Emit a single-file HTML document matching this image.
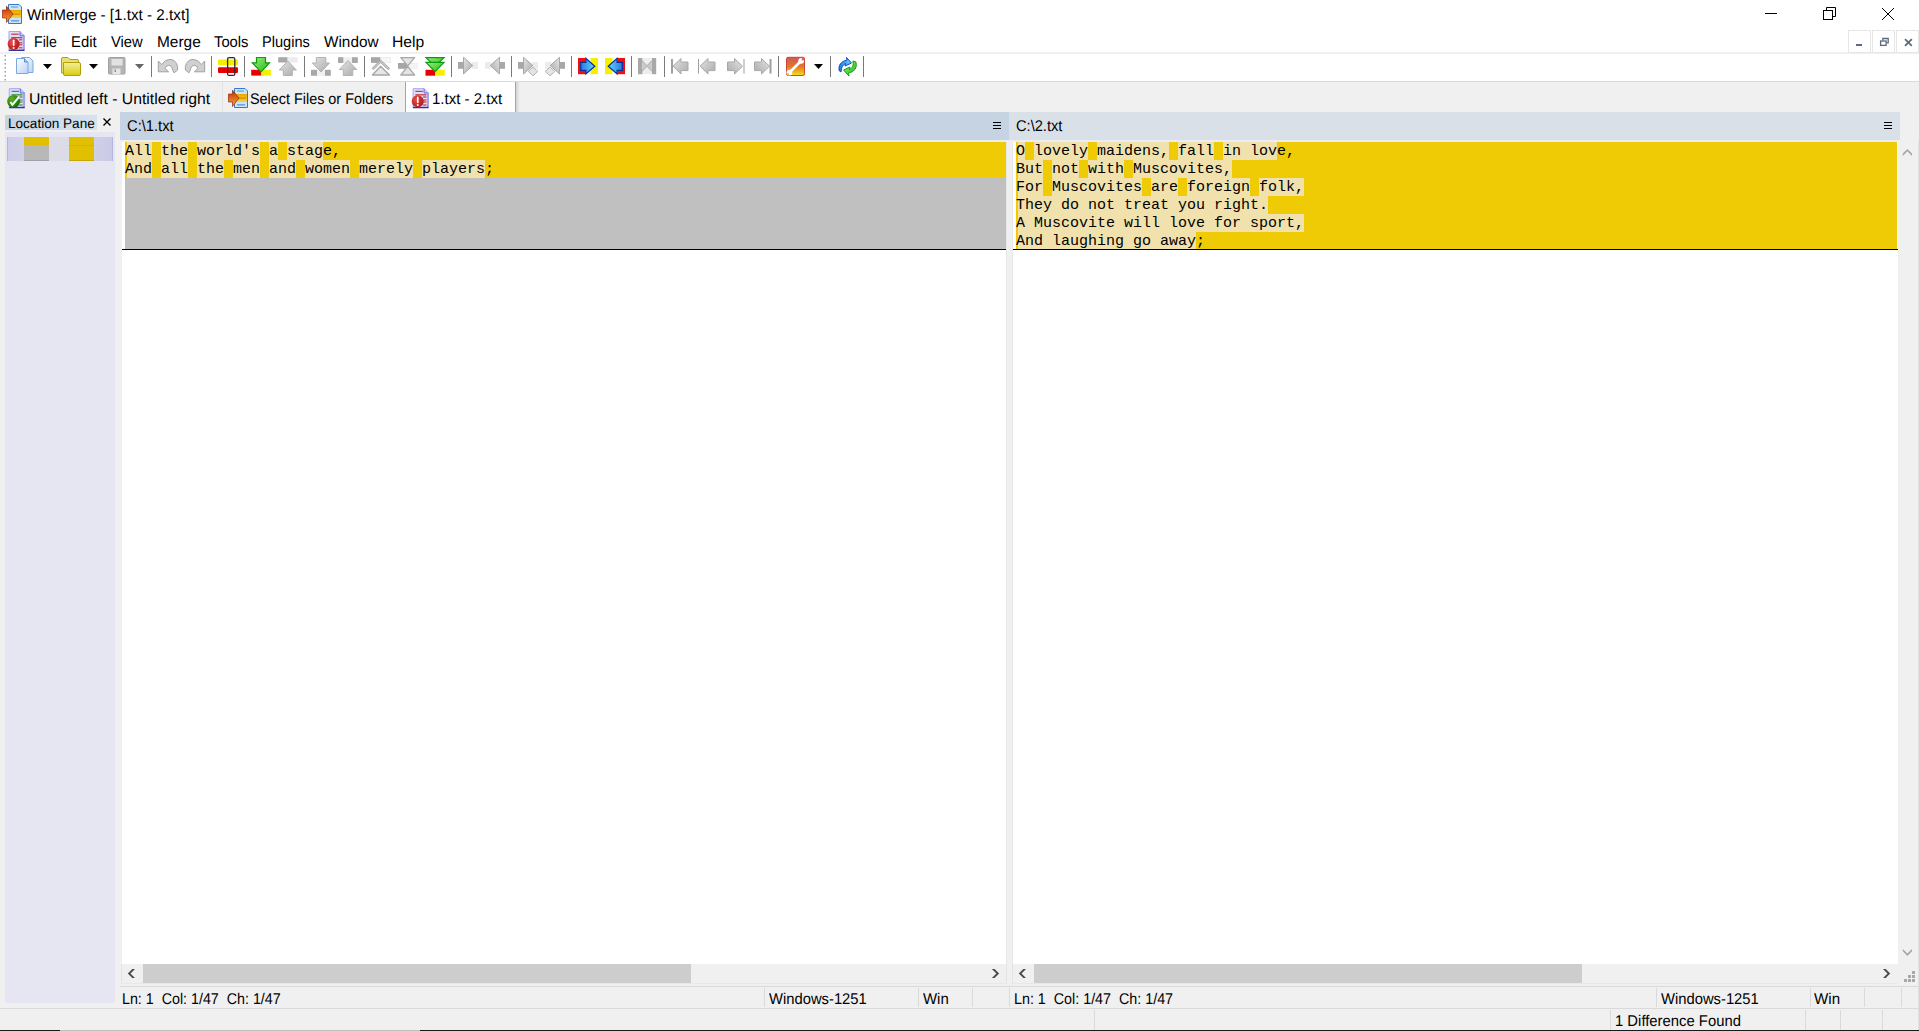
<!DOCTYPE html><html><head><meta charset="utf-8"><style>
*{margin:0;padding:0;box-sizing:border-box}
html,body{width:1919px;height:1031px;overflow:hidden;background:#f0f0f0;position:relative}
.a{position:absolute}
.t{position:absolute;font-family:"Liberation Sans",sans-serif;font-size:15px;line-height:17px;white-space:pre;color:#000;text-rendering:geometricPrecision}
.m{position:absolute;font-family:"Liberation Mono",monospace;font-size:15px;line-height:18px;white-space:pre;color:#000}
</style></head><body>
<div class="a" style="left:0px;top:0px;width:1919px;height:52px;background:#ffffff;"></div>
<div class="a" style="left:0px;top:52px;width:1919px;height:2px;background:#f0f0f0;"></div>
<div class="a" style="left:0px;top:54px;width:1919px;height:27px;background:#ffffff;"></div>
<div class="a" style="left:0px;top:81px;width:1919px;height:1px;background:#dadada;"></div>
<div class="t" style="left:27.37px;top:6.90px;font-size:15.5px;transform:scaleX(0.9818);transform-origin:0 0;">WinMerge - [1.txt - 2.txt]</div>
<div class="t" style="left:34.02px;top:34.00px;font-size:15.5px;transform:scaleX(0.9153);transform-origin:0 0;">File</div>
<div class="t" style="left:71.08px;top:34.00px;font-size:15.5px;transform:scaleX(0.9582);transform-origin:0 0;">Edit</div>
<div class="t" style="left:111.06px;top:34.00px;font-size:15.5px;transform:scaleX(0.9519);transform-origin:0 0;">View</div>
<div class="t" style="left:156.55px;top:34.00px;font-size:15.5px;transform:scaleX(0.9957);transform-origin:0 0;">Merge</div>
<div class="t" style="left:214.41px;top:34.00px;font-size:15.5px;transform:scaleX(0.9527);transform-origin:0 0;">Tools</div>
<div class="t" style="left:262.40px;top:34.00px;font-size:15.5px;transform:scaleX(0.9404);transform-origin:0 0;">Plugins</div>
<div class="t" style="left:324.27px;top:34.00px;font-size:15.5px;transform:scaleX(0.9890);transform-origin:0 0;">Window</div>
<div class="t" style="left:392.43px;top:34.00px;font-size:15.5px;transform:scaleX(1.0136);transform-origin:0 0;">Help</div>
<div class="t" style="left:28.80px;top:90.80px;font-size:15.5px;transform:scaleX(1.0159);transform-origin:0 0;">Untitled left - Untitled right</div>
<div class="a" style="left:222px;top:82px;width:1px;height:30px;background:#e2e2e2;"></div>
<div class="t" style="left:249.52px;top:90.80px;font-size:15.5px;transform:scaleX(0.9282);transform-origin:0 0;">Select Files or Folders</div>
<div class="a" style="left:405px;top:82px;width:111px;height:30px;background:#ffffff;border-left:1px solid #a4a4a4;border-right:1px solid #a4a4a4"></div>
<div class="a" style="left:516px;top:82px;width:4px;height:30px;background:linear-gradient(90deg,#d4d4d4,#f0f0f0);"></div>
<div class="t" style="left:432.40px;top:90.80px;font-size:15.5px;transform:scaleX(0.9688);transform-origin:0 0;">1.txt - 2.txt</div>
<div class="a" style="left:5px;top:115px;width:92px;height:15px;background:linear-gradient(90deg,#c6d3e3,#d6e2f0);"></div>
<div class="t" style="left:7.80px;top:114.90px;font-size:13.7px;transform:scaleX(0.9911);transform-origin:0 0;">Location Pane</div>
<div class="a" style="left:5px;top:132px;width:110px;height:871px;background:#e6e6f2;"></div>
<div class="a" style="left:7px;top:137px;width:106px;height:24px;background:linear-gradient(90deg,#cdcde8,#d6d6ea 30%,#d4d4ea 70%,#cacae6);border-right:1px solid #b6b6dc;border-left:1px solid #b6b6dc"></div>
<div class="a" style="left:24px;top:137px;width:25px;height:8px;background:#e0c000;"></div>
<div class="a" style="left:24px;top:145px;width:25px;height:16px;background:#b8b8b8;"></div>
<div class="a" style="left:49px;top:137px;width:20px;height:24px;background:#dcdce6;"></div>
<div class="a" style="left:69px;top:137px;width:25px;height:24px;background:#e0c000;"></div>
<div class="a" style="left:69px;top:145px;width:25px;height:1px;background:#d4b400;"></div>
<div class="a" style="left:24px;top:160px;width:25px;height:1px;background:#a0a0a8;"></div>
<div class="a" style="left:69px;top:160px;width:25px;height:1px;background:#c8a800;"></div>
<div class="a" style="left:120px;top:112px;width:889px;height:28px;background:#c6d3e2;"></div>
<div class="a" style="left:1009px;top:112px;width:891px;height:28px;background:#dae0e8;"></div>
<div class="t" style="left:127.31px;top:117.90px;font-size:15.5px;transform:scaleX(0.9494);transform-origin:0 0;">C:\1.txt</div>
<div class="t" style="left:1016.31px;top:117.90px;font-size:15.5px;transform:scaleX(0.9453);transform-origin:0 0;">C:\2.txt</div>
<div class="a" style="left:122px;top:140px;width:884px;height:2px;background:#ececf3;"></div>
<div class="a" style="left:1013px;top:140px;width:885px;height:2px;background:#ececf3;"></div>
<div class="a" style="left:122px;top:142px;width:884px;height:822px;background:#ffffff;"></div>
<div class="a" style="left:1013px;top:142px;width:885px;height:822px;background:#ffffff;"></div>
<div class="a" style="left:125px;top:142px;width:881px;height:18px;background:#efcb05;"></div>
<div class="a" style="left:127px;top:142px;width:25px;height:18px;background:#f1e2ad;"></div>
<div class="a" style="left:161px;top:142px;width:27px;height:18px;background:#f1e2ad;"></div>
<div class="a" style="left:197px;top:142px;width:63px;height:18px;background:#f1e2ad;"></div>
<div class="a" style="left:269px;top:142px;width:9px;height:18px;background:#f1e2ad;"></div>
<div class="a" style="left:287px;top:142px;width:36px;height:18px;background:#f1e2ad;"></div>
<div class="a" style="left:125px;top:160px;width:881px;height:18px;background:#efcb05;"></div>
<div class="a" style="left:127px;top:160px;width:25px;height:18px;background:#f1e2ad;"></div>
<div class="a" style="left:161px;top:160px;width:27px;height:18px;background:#f1e2ad;"></div>
<div class="a" style="left:197px;top:160px;width:27px;height:18px;background:#f1e2ad;"></div>
<div class="a" style="left:233px;top:160px;width:27px;height:18px;background:#f1e2ad;"></div>
<div class="a" style="left:269px;top:160px;width:27px;height:18px;background:#f1e2ad;"></div>
<div class="a" style="left:305px;top:160px;width:45px;height:18px;background:#f1e2ad;"></div>
<div class="a" style="left:359px;top:160px;width:54px;height:18px;background:#f1e2ad;"></div>
<div class="a" style="left:422px;top:160px;width:63px;height:18px;background:#f1e2ad;"></div>
<div class="a" style="left:125px;top:178px;width:881px;height:18px;background:#c0c0c0;"></div>
<div class="a" style="left:125px;top:196px;width:881px;height:18px;background:#c0c0c0;"></div>
<div class="a" style="left:125px;top:214px;width:881px;height:18px;background:#c0c0c0;"></div>
<div class="a" style="left:125px;top:232px;width:881px;height:18px;background:#c0c0c0;"></div>
<div class="a" style="left:122px;top:249px;width:884px;height:1px;background:#000;"></div>
<div class="m" style="left:125px;top:143px">All the world's a stage,</div>
<div class="m" style="left:125px;top:161px">And all the men and women merely players;</div>
<div class="a" style="left:1016px;top:142px;width:881px;height:18px;background:#efcb05;"></div>
<div class="a" style="left:1018px;top:142px;width:7px;height:18px;background:#f1e2ad;"></div>
<div class="a" style="left:1034px;top:142px;width:54px;height:18px;background:#f1e2ad;"></div>
<div class="a" style="left:1097px;top:142px;width:72px;height:18px;background:#f1e2ad;"></div>
<div class="a" style="left:1178px;top:142px;width:36px;height:18px;background:#f1e2ad;"></div>
<div class="a" style="left:1223px;top:142px;width:54px;height:18px;background:#f1e2ad;"></div>
<div class="a" style="left:1016px;top:160px;width:881px;height:18px;background:#efcb05;"></div>
<div class="a" style="left:1018px;top:160px;width:25px;height:18px;background:#f1e2ad;"></div>
<div class="a" style="left:1052px;top:160px;width:27px;height:18px;background:#f1e2ad;"></div>
<div class="a" style="left:1088px;top:160px;width:36px;height:18px;background:#f1e2ad;"></div>
<div class="a" style="left:1133px;top:160px;width:99px;height:18px;background:#f1e2ad;"></div>
<div class="a" style="left:1016px;top:178px;width:881px;height:18px;background:#efcb05;"></div>
<div class="a" style="left:1018px;top:178px;width:25px;height:18px;background:#f1e2ad;"></div>
<div class="a" style="left:1052px;top:178px;width:90px;height:18px;background:#f1e2ad;"></div>
<div class="a" style="left:1151px;top:178px;width:27px;height:18px;background:#f1e2ad;"></div>
<div class="a" style="left:1187px;top:178px;width:63px;height:18px;background:#f1e2ad;"></div>
<div class="a" style="left:1259px;top:178px;width:45px;height:18px;background:#f1e2ad;"></div>
<div class="a" style="left:1016px;top:196px;width:881px;height:18px;background:#efcb05;"></div>
<div class="a" style="left:1018px;top:196px;width:250px;height:18px;background:#f1e2ad;"></div>
<div class="a" style="left:1016px;top:214px;width:881px;height:18px;background:#efcb05;"></div>
<div class="a" style="left:1018px;top:214px;width:286px;height:18px;background:#f1e2ad;"></div>
<div class="a" style="left:1016px;top:232px;width:881px;height:18px;background:#efcb05;"></div>
<div class="a" style="left:1018px;top:232px;width:178px;height:18px;background:#f1e2ad;"></div>
<div class="a" style="left:1013px;top:249px;width:885px;height:1px;background:#000;"></div>
<div class="m" style="left:1016px;top:143px">O lovely maidens, fall in love,</div>
<div class="m" style="left:1016px;top:161px">But not with Muscovites,</div>
<div class="m" style="left:1016px;top:179px">For Muscovites are foreign folk,</div>
<div class="m" style="left:1016px;top:197px">They do not treat you right.</div>
<div class="m" style="left:1016px;top:215px">A Muscovite will love for sport,</div>
<div class="m" style="left:1016px;top:233px">And laughing go away;</div>
<div class="a" style="left:122px;top:964px;width:884px;height:19px;background:#f0f0f0;"></div>
<div class="a" style="left:143px;top:964px;width:548px;height:19px;background:#cdcdcd;"></div>
<div class="a" style="left:1013px;top:964px;width:885px;height:19px;background:#f0f0f0;"></div>
<div class="a" style="left:1034px;top:964px;width:548px;height:19px;background:#cdcdcd;"></div>
<div class="a" style="left:1898px;top:141px;width:20px;height:823px;background:#f0f0f0;"></div>
<div class="a" style="left:121px;top:964px;width:1px;height:21px;background:#e4e4e4;"></div>
<div class="a" style="left:1006px;top:964px;width:1px;height:21px;background:#e4e4e4;"></div>
<div class="a" style="left:1012px;top:964px;width:1px;height:21px;background:#e4e4e4;"></div>
<div class="a" style="left:122px;top:983px;width:884px;height:1px;background:#e8e8e8;"></div>
<div class="a" style="left:1013px;top:983px;width:885px;height:1px;background:#e8e8e8;"></div>
<div class="a" style="left:1006px;top:142px;width:1px;height:822px;background:#e8e8e8;"></div>
<div class="a" style="left:1012px;top:142px;width:1px;height:822px;background:#e8e8e8;"></div>
<div class="a" style="left:1918px;top:141px;width:1px;height:889px;background:#e2e2e2;"></div>
<div class="a" style="left:120px;top:986px;width:1799px;height:1px;background:#dadada;"></div>
<div class="a" style="left:0px;top:1008px;width:1919px;height:1px;background:#dadada;"></div>
<div class="t" style="left:121.62px;top:990.90px;font-size:15.5px;transform:scaleX(0.9207);transform-origin:0 0;">Ln: 1  Col: 1/47  Ch: 1/47</div>
<div class="t" style="left:1013.72px;top:990.90px;font-size:15.5px;transform:scaleX(0.9230);transform-origin:0 0;">Ln: 1  Col: 1/47  Ch: 1/47</div>
<div class="t" style="left:768.86px;top:990.90px;font-size:15.5px;transform:scaleX(0.9538);transform-origin:0 0;">Windows-1251</div>
<div class="t" style="left:922.66px;top:990.90px;font-size:15.5px;transform:scaleX(0.9653);transform-origin:0 0;">Win</div>
<div class="t" style="left:1660.56px;top:990.90px;font-size:15.5px;transform:scaleX(0.9538);transform-origin:0 0;">Windows-1251</div>
<div class="t" style="left:1814.07px;top:990.90px;font-size:15.5px;transform:scaleX(0.9768);transform-origin:0 0;">Win</div>
<div class="a" style="left:764px;top:988px;width:1px;height:19px;background:#dadada;"></div>
<div class="a" style="left:918px;top:988px;width:1px;height:19px;background:#dadada;"></div>
<div class="a" style="left:972px;top:988px;width:1px;height:19px;background:#dadada;"></div>
<div class="a" style="left:1009px;top:988px;width:1px;height:19px;background:#dadada;"></div>
<div class="a" style="left:1656px;top:988px;width:1px;height:19px;background:#dadada;"></div>
<div class="a" style="left:1810px;top:988px;width:1px;height:19px;background:#dadada;"></div>
<div class="a" style="left:1864px;top:988px;width:1px;height:19px;background:#dadada;"></div>
<div class="a" style="left:1901px;top:988px;width:1px;height:19px;background:#dadada;"></div>
<div class="a" style="left:1094px;top:1010px;width:1px;height:20px;background:#dadada;"></div>
<div class="a" style="left:1610px;top:1010px;width:1px;height:20px;background:#dadada;"></div>
<div class="a" style="left:1805px;top:1010px;width:1px;height:20px;background:#dadada;"></div>
<div class="a" style="left:1840px;top:1010px;width:1px;height:20px;background:#dadada;"></div>
<div class="a" style="left:1882px;top:1010px;width:1px;height:20px;background:#dadada;"></div>
<div class="t" style="left:1614.81px;top:1013.00px;font-size:15.5px;transform:scaleX(0.9569);transform-origin:0 0;">1 Difference Found</div>
<div class="a" style="left:0px;top:1030px;width:60px;height:1px;background:#1a1a1a;"></div>
<div class="a" style="left:60px;top:1030px;width:360px;height:1px;background:#c0c0c0;"></div>
<div class="a" style="left:420px;top:1030px;width:1499px;height:1px;background:#1a1a1a;"></div>
<svg class="a" style="left:0;top:0" width="1919" height="1031">
<defs>
<linearGradient id="gArrowOr" x1="0" y1="0" x2="0" y2="1"><stop offset="0" stop-color="#b83010"/><stop offset="0.5" stop-color="#e06a20"/><stop offset="1" stop-color="#f4b020"/></linearGradient>
<linearGradient id="gYel" x1="0" y1="0" x2="0" y2="1"><stop offset="0" stop-color="#e8a800"/><stop offset="0.5" stop-color="#f0c010"/><stop offset="1" stop-color="#eed060"/></linearGradient>
<radialGradient id="gRed" cx="0.35" cy="0.35" r="0.7"><stop offset="0" stop-color="#f04a4a"/><stop offset="1" stop-color="#b01818"/></radialGradient>
<radialGradient id="gGrn" cx="0.35" cy="0.3" r="0.75"><stop offset="0" stop-color="#60b020"/><stop offset="1" stop-color="#106a10"/></radialGradient>
<linearGradient id="gDoc" x1="0" y1="0" x2="1" y2="1"><stop offset="0" stop-color="#ffffff"/><stop offset="1" stop-color="#b8d4f6"/></linearGradient>
<linearGradient id="gFold" x1="0" y1="0" x2="0" y2="1"><stop offset="0" stop-color="#f4ee9a"/><stop offset="1" stop-color="#d8cc10"/></linearGradient>
<linearGradient id="gGray" x1="0" y1="0" x2="1" y2="1"><stop offset="0" stop-color="#e4e4e4"/><stop offset="1" stop-color="#aaaaaa"/></linearGradient>
<linearGradient id="gGreen" x1="0" y1="0" x2="1" y2="1"><stop offset="0" stop-color="#9af07a"/><stop offset="1" stop-color="#22b818"/></linearGradient>
<linearGradient id="gBlue" x1="0" y1="0" x2="1" y2="0"><stop offset="0" stop-color="#2a78e0"/><stop offset="1" stop-color="#60d8fa"/></linearGradient>
<linearGradient id="gBlueL" x1="1" y1="0" x2="0" y2="0"><stop offset="0" stop-color="#2a78e0"/><stop offset="1" stop-color="#60d8fa"/></linearGradient>
<linearGradient id="gWrench" x1="0" y1="0" x2="0" y2="1"><stop offset="0" stop-color="#cc5050"/><stop offset="0.55" stop-color="#ec7a18"/><stop offset="1" stop-color="#f8e410"/></linearGradient>
<g id="appicon">
  <path d="M6.5,0.5 H17 L19.5,3 V19.5 H6.5 Z" fill="#cfe3f7" stroke="#2f7ccc" stroke-width="1"/>
  <rect x="9" y="2" width="7" height="2" fill="#90bce8"/>
  <rect x="8" y="6" width="11" height="8" fill="url(#gYel)"/>
  <rect x="10" y="9.5" width="8" height="1.5" fill="#e09000"/>
  <rect x="9" y="16" width="8" height="1.6" fill="#6ca8e2"/>
  <path d="M0.5,6 H4.5 V2.2 L11,10 L4.5,18.5 V14 H0.5 Z" fill="url(#gArrowOr)" stroke="#902810" stroke-width="0.7"/>
</g>
<g id="docbase">
  <path d="M0.5,0.5 H11.5 L15.8,4.8 V19.5 H0.5 Z" fill="#dedcfa" stroke="#a4a4f4" stroke-width="1"/>
  <path d="M11.5,0.5 V4.8 H15.8" fill="#c4c4f8" stroke="#6a6ae8" stroke-width="1"/>
  <rect x="14.3" y="5" width="1.5" height="14" fill="#a0a0e6"/>
  <rect x="0.3" y="18.6" width="15.6" height="1.4" fill="#34348c"/>
</g>
<g id="docred">
  <use href="#docbase"/>
  <g fill="#c02020" opacity="0.85">
  <rect x="2.8" y="2.6" width="7.4" height="1.2"/><rect x="2.8" y="6" width="11" height="1.3"/>
  <rect x="10.5" y="8.2" width="3.3" height="1.2"/><rect x="10.5" y="11.2" width="3.3" height="1.2"/>
  <rect x="10.5" y="13.2" width="3.3" height="1.2"/><rect x="10.5" y="16.2" width="3.3" height="1.2"/></g>
  <circle cx="5.1" cy="13.1" r="6" fill="url(#gRed)"/>
  <rect x="4.3" y="8.4" width="1.7" height="6.6" rx="0.8" fill="#fff"/>
  <circle cx="5.15" cy="16.9" r="1" fill="#fff"/>
</g>
<g id="docgreen">
  <use href="#docbase"/>
  <g fill="#1a8a1a" opacity="0.85">
  <rect x="2.8" y="2.6" width="7.4" height="1.2"/><rect x="2.8" y="6" width="11" height="1.3"/>
  <rect x="10.5" y="8.2" width="3.3" height="1.2"/><rect x="10.5" y="11.2" width="3.3" height="1.2"/>
  <rect x="10.5" y="13.2" width="3.3" height="1.2"/><rect x="10.5" y="16.2" width="3.3" height="1.2"/></g>
  <circle cx="4.8" cy="13.2" r="6.4" fill="url(#gGrn)"/>
  <path d="M1.6,13.8 L3.6,16.6 L10.2,8.6" fill="none" stroke="#fff" stroke-width="2"/>
</g>
</defs>
<use href="#appicon" transform="translate(2,4)"/>
<use href="#appicon" transform="translate(228,88)"/>
<use href="#docred" transform="translate(8.5,31)"/>
<use href="#docgreen" transform="translate(8.8,88.2)"/>
<use href="#docred" transform="translate(412.6,88.2)"/>
<g stroke="#000" stroke-width="1" fill="none">
<line x1="1765" y1="13.5" x2="1777" y2="13.5"/>
<rect x="1823.5" y="10.5" width="9" height="9"/>
<path d="M1826.5,10.5 V7.5 H1835.5 V16.5 H1832.5"/>
<path d="M1882,8 L1894,20 M1894,8 L1882,20"/>
</g>
<rect x="1848.5" y="30.5" width="22" height="22" fill="#fff" stroke="#e6e6e6"/>
<rect x="1872.5" y="30.5" width="22" height="22" fill="#fff" stroke="#e6e6e6"/>
<rect x="1896.5" y="30.5" width="22" height="22" fill="#fff" stroke="#e6e6e6"/>
<rect x="1856" y="44" width="6" height="2" fill="#5b6b7d"/>
<g fill="none" stroke="#5b6b7d" stroke-width="1.3"><rect x="1880.6" y="41" width="5.5" height="4.4"/><path d="M1882.8,40.5 V38.5 H1888.2 V42.8 H1886.5"/></g>
<path d="M1905,39.2 L1911.8,45.8 M1911.8,39.2 L1905,45.8" stroke="#5b6b7d" stroke-width="1.8"/>
<rect x="4.5" y="55" width="1.5" height="1.5" fill="#a0a0a0"/>
<rect x="4.5" y="59" width="1.5" height="1.5" fill="#a0a0a0"/>
<rect x="4.5" y="63" width="1.5" height="1.5" fill="#a0a0a0"/>
<rect x="4.5" y="67" width="1.5" height="1.5" fill="#a0a0a0"/>
<rect x="4.5" y="71" width="1.5" height="1.5" fill="#a0a0a0"/>
<rect x="4.5" y="75" width="1.5" height="1.5" fill="#a0a0a0"/>
<rect x="4.5" y="79" width="1.5" height="1.5" fill="#a0a0a0"/>
<line x1="151.5" y1="56" x2="151.5" y2="77" stroke="#7a7a7a" stroke-width="1"/>
<line x1="211.5" y1="56" x2="211.5" y2="77" stroke="#7a7a7a" stroke-width="1"/>
<line x1="244.5" y1="56" x2="244.5" y2="77" stroke="#7a7a7a" stroke-width="1"/>
<line x1="304.5" y1="56" x2="304.5" y2="77" stroke="#7a7a7a" stroke-width="1"/>
<line x1="364.5" y1="56" x2="364.5" y2="77" stroke="#7a7a7a" stroke-width="1"/>
<line x1="451.5" y1="56" x2="451.5" y2="77" stroke="#7a7a7a" stroke-width="1"/>
<line x1="511.5" y1="56" x2="511.5" y2="77" stroke="#7a7a7a" stroke-width="1"/>
<line x1="571.5" y1="56" x2="571.5" y2="77" stroke="#7a7a7a" stroke-width="1"/>
<line x1="631.5" y1="56" x2="631.5" y2="77" stroke="#7a7a7a" stroke-width="1"/>
<line x1="664.5" y1="56" x2="664.5" y2="77" stroke="#7a7a7a" stroke-width="1"/>
<line x1="778.5" y1="56" x2="778.5" y2="77" stroke="#7a7a7a" stroke-width="1"/>
<line x1="830.5" y1="56" x2="830.5" y2="77" stroke="#7a7a7a" stroke-width="1"/>
<line x1="863.5" y1="56" x2="863.5" y2="77" stroke="#7a7a7a" stroke-width="1"/>
<path d="M43,64 H52 L47.5,69 Z" fill="#000"/>
<path d="M89,64 H98 L93.5,69 Z" fill="#000"/>
<path d="M135,64 H144 L139.5,69 Z" fill="#666"/>
<path d="M814,64 H823 L818.5,69 Z" fill="#000"/>
<path d="M21.5,57.5 H29.5 L33,61 V72.5 H21.5 Z" fill="url(#gDoc)" stroke="#7ea6e0"/>
<path d="M16.5,58.5 H24.5 L28,62 V73.5 H16.5 Z" fill="url(#gDoc)" stroke="#7ea6e0"/>
<path d="M24.5,58.5 V62 H28" fill="#a8c8f0" stroke="#5a8ad8"/>
<path d="M61.5,59 Q61.5,57.5 63,57.5 H68 L70,59.5 H77 Q78.5,59.5 78.5,61 V73 H61.5 Z" fill="#e8e070" stroke="#b0a010"/>
<path d="M63.5,62.5 H79 Q80.5,62.5 80.5,64 V74 Q80.5,75.5 79,75.5 H65 Q63.5,75.5 63.5,74 Z" fill="url(#gFold)" stroke="#b0a010"/>
<rect x="108.5" y="57.5" width="16.5" height="16.5" rx="1" fill="#b4b4b4" stroke="#a0a0a0"/>
<rect x="111.5" y="59" width="11" height="6.5" fill="#e2e2e2"/>
<rect x="112.5" y="68.5" width="8" height="5.5" fill="#e6e6e6"/>
<rect x="114.5" y="69.5" width="1.5" height="2.5" fill="#909090"/>
<g transform="translate(156,56)"><path d="M2.3,5 L5.6,8.6 Q9,3.4 14,3.4 Q20,3.6 21.6,10.5 L21.6,14 L18,16.8 L16.8,14.4 Q16,9.4 12.6,9.4 Q9.9,9.5 9.1,12.4 L12.6,15.8 H2.3 Z" fill="#d0d0d0" stroke="#a2a2a2" stroke-width="1"/></g>
<g transform="translate(207,56) scale(-1,1)"><path d="M2.3,5 L5.6,8.6 Q9,3.4 14,3.4 Q20,3.6 21.6,10.5 L21.6,14 L18,16.8 L16.8,14.4 Q16,9.4 12.6,9.4 Q9.9,9.5 9.1,12.4 L12.6,15.8 H2.3 Z" fill="#d0d0d0" stroke="#a2a2a2" stroke-width="1"/></g>
<rect x="218" y="59.5" width="20" height="5.7" rx="1" fill="#f6ee00"/>
<rect x="218" y="67.3" width="20" height="5.7" rx="1" fill="#e80000"/>
<rect x="227.6" y="57.6" width="7.2" height="17.8" rx="1.5" fill="none" stroke="#2a2a2a" stroke-width="1.3"/>
<rect x="251.2" y="69.8" width="9.8" height="5.8" fill="#e80000"/><rect x="261" y="69.8" width="9.9" height="5.8" fill="#f4f000"/>
<path d="M256.5,57.5 H265.5 V62.8 H269.5 L261,71.8 L252.3,62.8 H256.5 Z" fill="url(#gGreen)" stroke="#0e9a0e" stroke-width="1.2"/>
<rect x="278.2" y="57.2" width="9.4" height="5.3" fill="#a8a8a8"/><rect x="287.6" y="57.2" width="10" height="5.3" fill="#ececec"/>
<path d="M287.8,61 L296.4,70 H292.3 V75.5 H283.3 V70 H279.3 Z" fill="url(#gGray)" stroke="#b2b2b2"/>
<rect x="311" y="69.8" width="6" height="6" fill="#a8a8a8"/><rect x="324.8" y="69.8" width="6" height="6" fill="#a8a8a8"/><rect x="317" y="69.8" width="7.8" height="6" fill="#f0f0f0"/>
<path d="M316.3,57.5 H325.8 V63 H329.5 L321,72 L312.3,63 H316.3 Z" fill="url(#gGray)" stroke="#b2b2b2"/>
<rect x="338" y="57.2" width="5.6" height="5.8" fill="#a8a8a8"/><rect x="351.8" y="57.2" width="6" height="5.8" fill="#a8a8a8"/><rect x="343.6" y="57.2" width="8.2" height="5.8" fill="#f0f0f0"/>
<path d="M348,60.5 L356.7,69.5 H352.8 V75.5 H343.3 V69.5 H339.3 Z" fill="url(#gGray)" stroke="#b2b2b2"/>
<rect x="371" y="57.2" width="9.7" height="5.7" fill="#a6a6a6"/><rect x="380.7" y="57.5" width="10" height="5.2" fill="#f6f6f6" stroke="#e4e4e4" stroke-width="0.6"/>
<path d="M372.6,69.2 L380.6,61.2 L389.2,69.2" fill="none" stroke="#a8a8a8" stroke-width="2.6"/>
<path d="M372.6,69.2 L380.6,61.2 L389.2,69.2" fill="none" stroke="#d8d8d8" stroke-width="1"/>
<path d="M380.6,66.2 L389.4,75 H372.4 Z" fill="#e6e6e6" stroke="#a8a8a8" stroke-width="1.4" stroke-linejoin="round"/>
<rect x="398" y="63" width="9.7" height="5.8" fill="#a6a6a6"/><rect x="407.7" y="63.3" width="9.8" height="5.3" fill="#f4f4f4" stroke="#e6e6e6" stroke-width="0.6"/>
<path d="M400.8,57.6 H414.6 L407.7,65.8 Z" fill="#e4e4e4" stroke="#a8a8a8" stroke-width="1.3" stroke-linejoin="round"/>
<path d="M407.7,66.4 L414.6,75 H400.8 Z" fill="#e4e4e4" stroke="#a8a8a8" stroke-width="1.3" stroke-linejoin="round"/>
<rect x="425.5" y="69.8" width="9.7" height="5.9" fill="#e80000"/><rect x="435.2" y="69.8" width="9.6" height="5.9" fill="#f4f000"/>
<path d="M426,57.6 H444 L435,66.3 Z" fill="url(#gGreen)" stroke="#0e9a0e" stroke-width="1.2"/>
<path d="M426,62.3 H444 L435,71.6 Z" fill="url(#gGreen)" stroke="#0e9a0e" stroke-width="1.2"/>
<g transform="translate(458,0)"><rect x="0" y="62" width="6" height="6.8" fill="#a8a8a8"/><rect x="14" y="62" width="6" height="6.8" fill="#ececec"/><path d="M5.5,57.3 L14.8,65.5 L5.5,74 Z" fill="url(#gGray)" stroke="#a8a8a8"/></g>
<g transform="translate(505,0) scale(-1,1)"><rect x="0" y="62" width="6" height="6.8" fill="#a8a8a8"/><rect x="14" y="62" width="6" height="6.8" fill="#ececec"/><path d="M5.5,57.3 L14.8,65.5 L5.5,74 Z" fill="url(#gGray)" stroke="#a8a8a8"/></g>
<g transform="translate(518,0)"><rect x="0" y="62" width="6" height="6.8" fill="#a8a8a8"/><rect x="14" y="62" width="6" height="6.8" fill="#ececec"/><path d="M5.5,57.3 L14.8,65.5 L5.5,74 Z" fill="url(#gGray)" stroke="#a8a8a8"/><path d="M15,67.2 L19.8,71.4 L15,75.8 L10.2,71.4 Z" fill="#e4e4e4" stroke="#b4b4b4"/></g>
<g transform="translate(565,0) scale(-1,1)"><rect x="0" y="62" width="6" height="6.8" fill="#a8a8a8"/><rect x="14" y="62" width="6" height="6.8" fill="#ececec"/><path d="M5.5,57.3 L14.8,65.5 L5.5,74 Z" fill="url(#gGray)" stroke="#a8a8a8"/><path d="M15,67.2 L19.8,71.4 L15,75.8 L10.2,71.4 Z" fill="#e4e4e4" stroke="#b4b4b4"/></g>
<g transform="translate(578,0)"><rect x="0" y="58" width="7.7" height="16.2" fill="#ee1010"/><rect x="12.6" y="58" width="7.4" height="16.2" fill="#f6f000"/><path d="M2.7,62.3 H7.9 V58.3 L16.8,66.2 L7.9,74 V70.3 H2.7 Z" fill="url(#gBlue)" stroke="#0a2e9a" stroke-width="1.2"/></g>
<g transform="translate(625,0) scale(-1,1)"><rect x="0" y="58" width="7.7" height="16.2" fill="#ee1010"/><rect x="12.6" y="58" width="7.4" height="16.2" fill="#f6f000"/><path d="M2.7,62.3 H7.9 V58.3 L16.8,66.2 L7.9,74 V70.3 H2.7 Z" fill="url(#gBlue)" stroke="#0a2e9a" stroke-width="1.2"/></g>
<rect x="638" y="58" width="4.6" height="16.2" fill="#a8a8a8"/><rect x="651.8" y="58" width="4.4" height="16.2" fill="#a8a8a8"/><rect x="642.6" y="58" width="9.2" height="16.2" fill="#eeeeee"/>
<path d="M642,61 L652,71 M652,61 L642,71" stroke="#b4b4b4" stroke-width="1.4"/>
<path d="M642.6,62 L647,66 L642.6,70 Z M651.8,62 L647.2,66 L651.8,70 Z" fill="#c8c8c8"/>
<g transform="translate(671,0)"><rect x="0" y="59" width="2" height="14.6" fill="#a0a0a0"/><path d="M2,66.2 L10,58.5 V62 H17 V70.6 H10 V74 Z" fill="url(#gGray)" stroke="#a8a8a8"/></g>
<g transform="translate(698,0)"><rect x="0" y="59" width="1" height="14.6" fill="#a0a0a0"/><path d="M2,66.2 L10,58.5 V62 H17 V70.6 H10 V74 Z" fill="url(#gGray)" stroke="#a8a8a8"/></g>
<g transform="translate(744.5,0) scale(-1,1)"><rect x="0" y="59" width="1" height="14.6" fill="#a0a0a0"/><path d="M2,66.2 L10,58.5 V62 H17 V70.6 H10 V74 Z" fill="url(#gGray)" stroke="#a8a8a8"/></g>
<g transform="translate(771.5,0) scale(-1,1)"><rect x="0" y="59" width="2" height="14.6" fill="#a0a0a0"/><path d="M2,66.2 L10,58.5 V62 H17 V70.6 H10 V74 Z" fill="url(#gGray)" stroke="#a8a8a8"/></g>
<defs><linearGradient id="gWr2" x1="0" y1="0" x2="0" y2="1"><stop offset="0" stop-color="#c85a5a"/><stop offset="0.5" stop-color="#e4762a"/><stop offset="1" stop-color="#f6e012"/></linearGradient></defs>
<rect x="786.5" y="57.3" width="18" height="18.2" rx="1.6" fill="url(#gWr2)" stroke="#c83a2a" stroke-width="0.9"/>
<path d="M790,72 L800.5,61.5" stroke="#fff" stroke-width="2.6" stroke-linecap="round"/>
<circle cx="801.2" cy="60.8" r="2.9" fill="#fff"/><path d="M801.5,58 L804,58 L804,60.5 Z" fill="#e07050"/><circle cx="802.6" cy="59.4" r="1" fill="#d86a50"/>
<circle cx="789.4" cy="72.6" r="2.9" fill="#fff"/><circle cx="788" cy="74" r="1.1" fill="#f0c030"/>
<path d="M839,70.5 Q838,62 847,60 L846.5,57.5 L851.5,63 L845,66 L845.5,63.5 Q841.5,65 841,72 Z" fill="url(#gBlue)" stroke="#0a48d0" stroke-width="1"/>
<path d="M856,62 Q858,71 848.5,73 L849,76 L843.5,70 L850,67 L849.5,69.5 Q854,68 853,61 Z" fill="url(#gGreen)" stroke="#10a010" stroke-width="1"/>
<path d="M103.5,118.5 L110.5,125.5 M110.5,118.5 L103.5,125.5" stroke="#000" stroke-width="1.4"/>
<rect x="993" y="122" width="8" height="1" fill="#000"/>
<rect x="993" y="125" width="8" height="1" fill="#000"/>
<rect x="993" y="128" width="8" height="1" fill="#000"/>
<rect x="1884" y="122" width="8" height="1" fill="#000"/>
<rect x="1884" y="125" width="8" height="1" fill="#000"/>
<rect x="1884" y="128" width="8" height="1" fill="#000"/>
<polygon points="127.80,973.50 132.30,969.00 135.00,969.00 130.50,973.50 135.00,978.00 132.30,978.00" fill="#4a4a4a"/>
<polygon points="999.10,973.50 994.60,969.00 991.90,969.00 996.40,973.50 991.90,978.00 994.60,978.00" fill="#4a4a4a"/>
<polygon points="1018.80,973.50 1023.30,969.00 1026.00,969.00 1021.50,973.50 1026.00,978.00 1023.30,978.00" fill="#4a4a4a"/>
<polygon points="1890.20,973.50 1885.70,969.00 1883.00,969.00 1887.50,973.50 1883.00,978.00 1885.70,978.00" fill="#4a4a4a"/>
<polygon points="1907.40,148.90 1902.80,153.50 1902.80,155.90 1907.40,151.30 1912.00,155.90 1912.00,153.50" fill="#a6a6a6"/>
<polygon points="1907.40,955.90 1902.80,951.30 1902.80,948.90 1907.40,953.50 1912.00,948.90 1912.00,951.30" fill="#a6a6a6"/>
<rect x="1912" y="971" width="3" height="3" fill="#a8a8a8"/>
<rect x="1908" y="975" width="3" height="3" fill="#a8a8a8"/>
<rect x="1912" y="975" width="3" height="3" fill="#a8a8a8"/>
<rect x="1904" y="979" width="3" height="3" fill="#a8a8a8"/>
<rect x="1908" y="979" width="3" height="3" fill="#a8a8a8"/>
<rect x="1912" y="979" width="3" height="3" fill="#a8a8a8"/>
</svg>
</body></html>
